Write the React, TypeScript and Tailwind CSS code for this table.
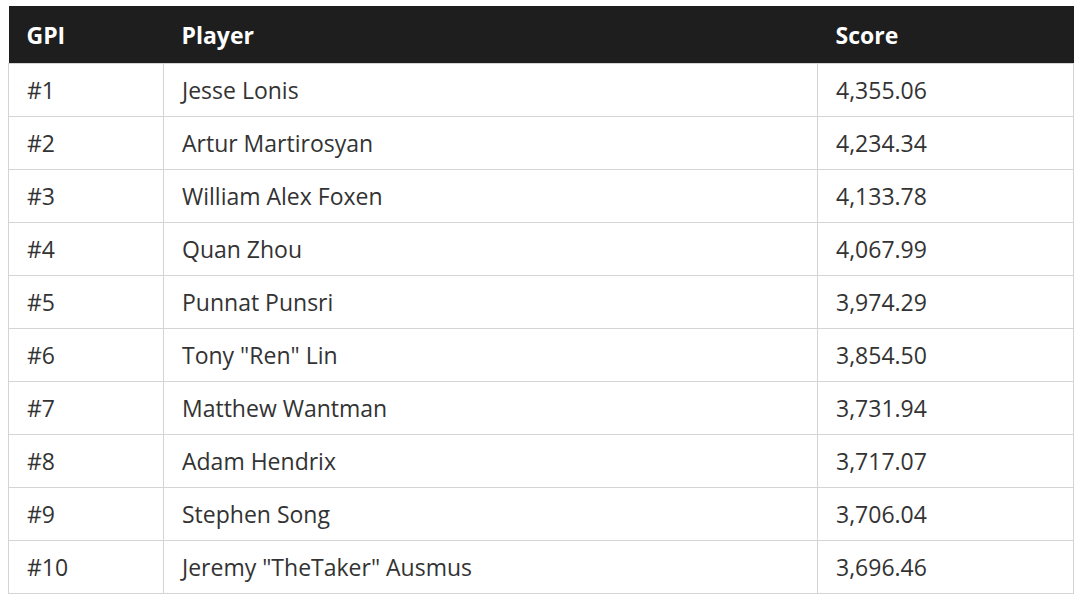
const rows = [
  { rank: "#1", player: "Jesse Lonis", score: "4,355.06" },
  { rank: "#2", player: "Artur Martirosyan", score: "4,234.34" },
  { rank: "#3", player: "William Alex Foxen", score: "4,133.78" },
  { rank: "#4", player: "Quan Zhou", score: "4,067.99" },
  { rank: "#5", player: "Punnat Punsri", score: "3,974.29" },
  { rank: "#6", player: 'Tony "Ren" Lin', score: "3,854.50" },
  { rank: "#7", player: "Matthew Wantman", score: "3,731.94" },
  { rank: "#8", player: "Adam Hendrix", score: "3,717.07" },
  { rank: "#9", player: "Stephen Song", score: "3,706.04" },
  { rank: "#10", player: 'Jeremy "TheTaker" Ausmus', score: "3,696.46" },
];

export default function App() {
  return (
    <div className="w-[1080px] h-[601px] bg-white pt-[6px] pl-[8px] font-['Open_Sans',sans-serif]">
      <table className="w-[1065px] border-collapse table-fixed text-[23px] text-[#333333]">
        <colgroup>
          <col className="w-[155px]" />
          <col className="w-[654px]" />
          <col className="w-[256px]" />
        </colgroup>
        <thead>
          <tr className="h-[57px] bg-[#1e1e1e] text-white">
            <th className="text-left font-bold pl-[18px] pt-[1px]">GPI</th>
            <th className="text-left font-bold pl-[18px] pt-[1px]">Player</th>
            <th className="text-left font-bold pl-[18px] pt-[1px]">Score</th>
          </tr>
        </thead>
        <tbody>
          {rows.map((r) => (
            <tr key={r.rank} className="h-[53px]">
              <td className="border border-[#d4d4d4] pl-[18px] pt-[1px]">{r.rank}</td>
              <td className="border border-[#d4d4d4] pl-[18px] pt-[1px]">{r.player}</td>
              <td className="border border-[#d4d4d4] pl-[18px] pt-[1px]">{r.score}</td>
            </tr>
          ))}
        </tbody>
      </table>
    </div>
  );
}
